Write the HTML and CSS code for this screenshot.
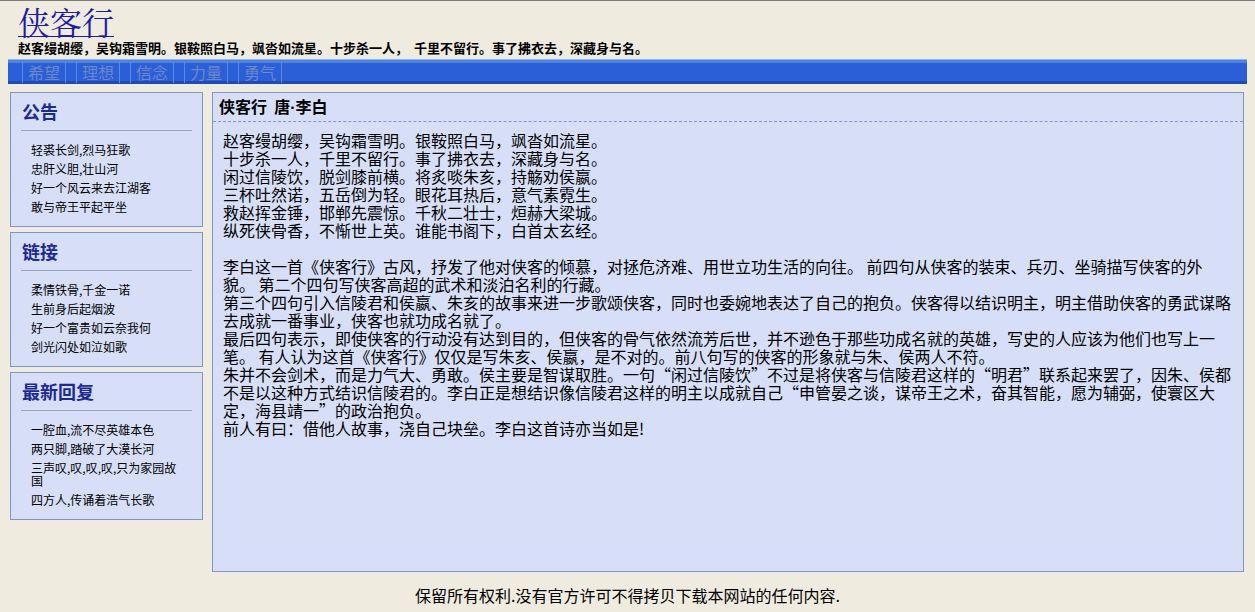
FILE: index.html
```html
<!DOCTYPE html>
<html lang="zh-CN">
<head>
<meta charset="utf-8">
<title>侠客行</title>
<link rel="stylesheet" href="styles.css">
</head>
<body>
<header class="site-header">
  <h1 class="site-title"><a href="#">侠客行</a></h1>
  <p class="tagline">赵客缦胡缨，吴钩霜雪明。银鞍照白马，飒沓如流星。十步杀一人，&nbsp; 千里不留行。事了拂衣去，深藏身与名。</p>
</header>
<nav class="nav">
  <a class="nav-item" href="#">希望</a>
  <a class="nav-item" href="#">理想</a>
  <a class="nav-item" href="#">信念</a>
  <a class="nav-item" href="#">力量</a>
  <a class="nav-item" href="#">勇气</a>
</nav>
<div class="layout">
  <aside class="sidebar">
    <section class="side-box">
      <h2 class="side-title">公告</h2>
      <hr class="side-rule">
      <ul class="side-list">
        <li>轻裘长剑,烈马狂歌</li>
        <li>忠肝义胆,壮山河</li>
        <li>好一个风云来去江湖客</li>
        <li>敢与帝王平起平坐</li>
      </ul>
    </section>
    <section class="side-box">
      <h2 class="side-title">链接</h2>
      <hr class="side-rule">
      <ul class="side-list">
        <li>柔情铁骨,千金一诺</li>
        <li>生前身后起烟波</li>
        <li>好一个富贵如云奈我何</li>
        <li>剑光闪处如泣如歌</li>
      </ul>
    </section>
    <section class="side-box">
      <h2 class="side-title">最新回复</h2>
      <hr class="side-rule">
      <ul class="side-list">
        <li>一腔血,流不尽英雄本色</li>
        <li>两只脚,踏破了大漠长河</li>
        <li>三声叹,叹,叹,叹,只为家园故国</li>
        <li>四方人,传诵着浩气长歌</li>
      </ul>
    </section>
  </aside>
  <main class="main-box">
    <h2 class="main-title">侠客行&nbsp; 唐<span class="dot">·</span>李白</h2>
    <div class="main-body">
      赵客缦胡缨，吴钩霜雪明。银鞍照白马，飒沓如流星。<br>
      十步杀一人，千里不留行。事了拂衣去，深藏身与名。<br>
      闲过信陵饮，脱剑膝前横。将炙啖朱亥，持觞劝侯嬴。<br>
      三杯吐然诺，五岳倒为轻。眼花耳热后，意气素霓生。<br>
      救赵挥金锤，邯郸先震惊。千秋二壮士，烜赫大梁城。<br>
      纵死侠骨香，不惭世上英。谁能书阁下，白首太玄经。<br>
      <br>
      李白这一首《侠客行》古风，抒发了他对侠客的倾慕，对拯危济难、用世立功生活的向往。 前四句从侠客的装束、兵刃、坐骑描写侠客的外貌。 第二个四句写侠客高超的武术和淡泊名利的行藏。<br>
      第三个四句引入信陵君和侯嬴、朱亥的故事来进一步歌颂侠客，同时也委婉地表达了自己的抱负。侠客得以结识明主，明主借助侠客的勇武谋略去成就一番事业，侠客也就功成名就了。<br>
      最后四句表示，即使侠客的行动没有达到目的，但侠客的骨气依然流芳后世，并不逊色于那些功成名就的英雄，写史的人应该为他们也写上一笔。 有人认为这首《侠客行》仅仅是写朱亥、侯嬴，是不对的。前八句写的侠客的形象就与朱、侯两人不符。<br>
      朱并不会剑术，而是力气大、勇敢。侯主要是智谋取胜。一句“闲过信陵饮”不过是将侠客与信陵君这样的“明君”联系起来罢了，因朱、侯都不是以这种方式结识信陵君的。李白正是想结识像信陵君这样的明主以成就自己“申管晏之谈，谋帝王之术，奋其智能，愿为辅弼，使寰区大定，海县靖一”的政治抱负。<br>
      前人有曰：借他人故事，浇自己块垒。李白这首诗亦当如是!
    </div>
  </main>
</div>
<footer class="footer">保留所有权利.没有官方许可不得拷贝下载本网站的任何内容.</footer>
</body>
</html>
```
FILE: styles.css
```css
html {
  background: #efecdf;
  border-top: 1px solid #7c7c7c;
}
body {
  margin: 0 8px;
  font-family: "Noto Sans CJK SC", sans-serif;
  color: #000;
}
.site-header {
  padding: 0 10px;
  height: 58px;
}
.site-title {
  margin: 0;
  padding-top: 1px;
  font-size: 32px;
  line-height: 38px;
  font-weight: normal;
  font-family: "Noto Serif CJK SC", "Noto Sans CJK SC", serif;
}
.site-title a {
  color: #1c1ca4;
  text-decoration: underline;
  text-decoration-thickness: 1px;
}
.tagline {
  margin: 0;
  font-size: 13px;
  line-height: 16px;
  font-weight: bold;
}
.nav {
  height: 25px;
  box-sizing: border-box;
  padding-left: 14px;
  display: flex;
  align-items: stretch;
  gap: 10px;
  background: linear-gradient(to bottom, #8bb6f0 0, #8bb6f0 1px, #4c84e2 1px, #4c84e2 4px, #2a5fd8 4px, #2a5fd8 22px, #1f4bb8 22px, #1f4bb8 25px);
}
.nav-item {
  display: block;
  padding: 0 5px;
  margin: 2px 0 1px;
  border-left: 1px solid #5b8ae4;
  border-right: 1px solid #5b8ae4;
  font-size: 16px;
  line-height: 22px;
  color: #6f86c8;
  text-decoration: none;
}
.layout {
  display: grid;
  grid-template-columns: 193px 1fr;
  gap: 9px;
  padding: 0 3px 0 2px;
  margin-top: 8px;
  align-items: start;
}
.sidebar {
  display: flex;
  flex-direction: column;
  gap: 5px;
}
.side-box {
  border: 1px solid #8096c8;
  background: #d6dff7;
  padding: 0 10px 7px;
}
.side-title {
  margin: 6px 0 0 1px;
  font-size: 18px;
  line-height: 24px;
  font-weight: bold;
  color: #1d2996;
}
.side-rule {
  margin: 7px 0 0;
  border: 0;
  border-top: 1px solid #9ca3b4;
  height: 0;
}
.side-list {
  list-style: none;
  margin: 0;
  padding: 12px 13px 0 10px;
  font-size: 12px;
  line-height: 13px;
}
.side-list li {
  margin-bottom: 6px;
}
.main-box {
  height: 480px;
  box-sizing: border-box;
  border: 1px solid #8096c8;
  background: #d6dff7;
}
.main-title {
  margin: 0;
  padding: 0 6px;
  height: 28px;
  font-size: 16px;
  line-height: 27px;
  font-weight: bold;
  border-bottom: 1px dashed #8096c8;
}
.dot {
  font-family: "Liberation Sans", sans-serif;
}
.main-body {
  padding: 9px 10px 0;
  font-size: 16px;
  line-height: 18px;
}
.footer {
  margin-top: 14px;
  text-align: center;
  font-size: 16px;
  line-height: 18px;
}
```
